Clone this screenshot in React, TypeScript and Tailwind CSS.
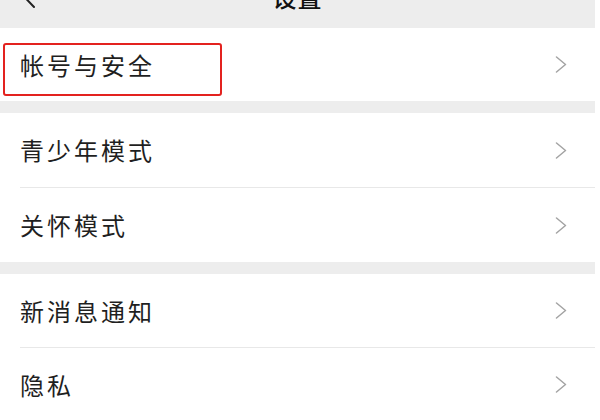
import React from 'react';

const font = { fontFamily: '"Noto Sans CJK SC", "Noto Sans", sans-serif' };

function Chevron() {
  return (
    <svg width="12" height="17" viewBox="0 0 12 17" className="shrink-0">
      <path d="M1.5 1 L10.5 8.5 L1.5 16" fill="none" stroke="#a3a3a3" strokeWidth="1.5" strokeLinecap="round" strokeLinejoin="round" />
    </svg>
  );
}

function Row({ label, h = 'h-[73px]', children }: { label: string; h?: string; children?: React.ReactNode }) {
  return (
    <div className={`relative ${h} bg-white flex items-center justify-between pl-[20px] pr-[28px]`}>
      <span className="text-[24px] tracking-[3px] text-[#1f1f1f] leading-none">{label}</span>
      <Chevron />
      {children}
    </div>
  );
}

function Divider() {
  return (
    <div className="h-px bg-white">
      <div className="ml-[20px] h-px bg-[#e8e8e8]" />
    </div>
  );
}

export default function App() {
  return (
    <div className="w-[600px] h-[420px] bg-white overflow-hidden" style={font}>
      <div className="w-[595px] bg-[#ededed]">
        {/* Nav bar, mostly scrolled off the top */}
        <div className="h-[28px] overflow-hidden">
          <div className="-mt-[28px] h-[50px] flex items-center justify-center relative">
            <svg width="14" height="24" viewBox="0 0 14 24" className="absolute left-[22px] top-[13px]">
              <path d="M12 1 L2 11.5 L12 22" fill="none" stroke="#222" strokeWidth="2" strokeLinecap="round" strokeLinejoin="round" />
            </svg>
            <span className="text-[24px] tracking-[1px] text-[#111] font-medium leading-none">设置</span>
          </div>
        </div>

        <Row label="帐号与安全">
          <div className="absolute left-[3px] top-[15px] w-[219px] h-[53px] border-[2.5px] border-[#e3221f] rounded-[3px]" />
        </Row>

        <div className="h-[12px]" />

        <Row label="青少年模式" h="h-[74px]" />
        <Divider />
        <Row label="关怀模式" h="h-[74px]" />

        <div className="h-[12px]" />

        <Row label="新消息通知" h="h-[73px]" />
        <Divider />
        <Row label="隐私" h="h-[73px]" />
      </div>
    </div>
  );
}
